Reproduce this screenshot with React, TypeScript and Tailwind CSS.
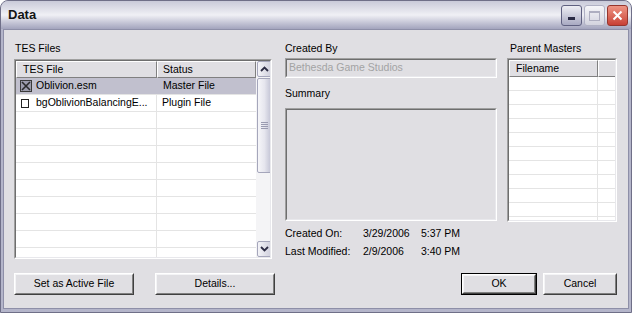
import React from 'react';

const font = { fontFamily: '"Liberation Sans", Arial, sans-serif' };

function Btn({ label, w, isDefault }: { label: string; w: string; isDefault?: boolean }) {
  return (
    <div className={`${w} h-[22px] ${isDefault ? 'border border-black' : ''}`}>
      <div className="h-full w-full border border-t-white border-l-white border-b-[#404040] border-r-[#404040]">
        <div className="h-full w-full flex items-center justify-center bg-[#e0dfe3] border border-t-[#f4f4f6] border-l-[#f4f4f6] border-b-[#808080] border-r-[#808080] text-[10.5px] text-black">
          {label}
        </div>
      </div>
    </div>
  );
}

function Sunken({ className, children }: { className: string; children?: React.ReactNode }) {
  return (
    <div className={`${className} border border-t-[#a0a0a0] border-l-[#a0a0a0] border-b-white border-r-white`}>
      <div className="h-full w-full border border-t-[#6e6e6e] border-l-[#6e6e6e] border-b-[#e8e8ec] border-r-[#e8e8ec] overflow-hidden">
        {children}
      </div>
    </div>
  );
}

function HeaderCell({ label, w, pl }: { label: string; w: string; pl: string }) {
  return (
    <div className={`${w} h-full shrink-0 bg-[#e0dfe3] border border-t-white border-l-white border-b-[#808080] border-r-[#808080] ${pl} flex items-center text-[10.5px]`}>
      {label}
    </div>
  );
}

function ScrollArrow({ up }: { up?: boolean }) {
  return (
    <div className="w-[15px] h-[16px] rounded-[2px] border border-[#a5a6bb] bg-gradient-to-r from-[#f4f4f8] to-[#cfcfdc] flex items-center justify-center">
      <svg width="9" height="6" viewBox="0 0 9 6">
        <path d={up ? 'M1 5 L4.5 1.5 L8 5' : 'M1 1 L4.5 4.5 L8 1'} stroke="#2c2c44" strokeWidth="1.8" fill="none" />
      </svg>
    </div>
  );
}

export default function App() {
  const filler = Array.from({ length: 8 });
  const masterRows = Array.from({ length: 10 });

  return (
    <div style={font} className="w-[632px] h-[313px] flex flex-col bg-[#b4b5ca] rounded-t-[8px] border border-[#6f6f88] overflow-hidden text-black">
      {/* title bar */}
      <div className="h-[28px] shrink-0 flex items-center pl-[7px] pr-[3px] bg-gradient-to-b from-[#c9cad9] via-[#f0f0f5] to-[#a3a4bd]">
        <span className="text-[13px] font-bold text-[#141414]">Data</span>
        <div className="ml-auto flex gap-[2px] pt-[1px]">
          <div className="w-[21px] h-[21px] rounded-[3px] border border-[#5f6080] bg-gradient-to-b from-[#eeeef4] to-[#a9aac2] flex items-end justify-center pb-[5px]">
            <div className="w-[7px] h-[3px] bg-[#2a2a44]" />
          </div>
          <div className="w-[21px] h-[21px] rounded-[3px] border border-[#b0b1c4] bg-gradient-to-b from-[#f6f6f9] to-[#d3d3de] flex items-center justify-center">
            <div className="w-[11px] h-[10px] border border-[#aeaec0] border-t-2" />
          </div>
          <div className="w-[21px] h-[21px] rounded-[3px] border border-[#96362e] bg-gradient-to-b from-[#ee9484] to-[#c83f35] flex items-center justify-center">
            <svg width="11" height="11" viewBox="0 0 11 11">
              <path d="M1.5 1.5 L9.5 9.5 M9.5 1.5 L1.5 9.5" stroke="white" strokeWidth="2" />
            </svg>
          </div>
        </div>
      </div>

      {/* body */}
      <div className="flex-1 mx-[2px] mb-[3px] bg-[#e0dfe3] border border-[#8e8fa8] pl-[10px] pr-[11px] pt-[12px] flex flex-col">
        <div className="flex gap-[10px]">
          {/* TES files */}
          <div className="w-[261px]">
            <div className="text-[10.5px] leading-[13px] pl-[1px]">TES Files</div>
            <Sunken className="mt-[4px] w-[258px] h-[200px] bg-white">
              <div className="flex h-full bg-white">
                <div className="w-[240px] flex flex-col">
                  <div className="h-[17px] flex shrink-0">
                    <HeaderCell label="TES File" w="w-[141px]" pl="pl-[6px]" />
                    <HeaderCell label="Status" w="w-[99px]" pl="pl-[5px]" />
                  </div>
                  <div className="flex h-[17px] border-b border-[#e4e4e4] bg-[#c1c0ce] text-[10.5px] items-center">
                    <div className="w-[141px] flex items-center pl-[4px] gap-[4px]">
                      <svg width="12" height="12" viewBox="0 0 12 12">
                        <rect x="0.5" y="0.5" width="11" height="11" fill="#9c9cac" stroke="#3a3a3a" />
                        <path d="M2 2 L10 10 M10 2 L2 10" stroke="#2a2a2a" strokeWidth="1.6" />
                      </svg>
                      <span>Oblivion.esm</span>
                    </div>
                    <div className="pl-[6px]">Master File</div>
                  </div>
                  <div className="flex h-[17px] border-b border-[#e4e4e4] text-[10.5px] items-center">
                    <div className="w-[141px] h-full flex items-center pl-[5px] gap-[7px] border-r border-[#e4e4e4]">
                      <div className="w-[8px] h-[9px] border border-[#222]" />
                      <span>bgOblivionBalancingE...</span>
                    </div>
                    <div className="pl-[5px]">Plugin File</div>
                  </div>
                  {filler.map((_, i) => (
                    <div key={i} className="flex h-[17px] border-b border-[#e4e4e4] shrink-0">
                      <div className="w-[141px] h-full border-r border-[#e4e4e4]" />
                    </div>
                  ))}
                  <div className="flex-1 flex">
                    <div className="w-[141px] h-full border-r border-[#e4e4e4]" />
                  </div>
                </div>
                {/* scrollbar */}
                <div className="w-[16px] h-full bg-[#f4f4f6] flex flex-col pl-[1px]">
                  <ScrollArrow up />
                  <div className="mt-[1px] w-[15px] h-[95px] rounded-[2px] border border-[#a5a6bb] bg-gradient-to-r from-[#f6f6f9] via-[#e6e6ee] to-[#c2c3d4] flex flex-col items-center justify-center gap-[1px]">
                    <div className="w-[7px] h-[1px] bg-[#9a9bb0]" />
                    <div className="w-[7px] h-[1px] bg-[#9a9bb0]" />
                    <div className="w-[7px] h-[1px] bg-[#9a9bb0]" />
                    <div className="w-[7px] h-[1px] bg-[#9a9bb0]" />
                  </div>
                  <div className="flex-1" />
                  <ScrollArrow />
                </div>
              </div>
            </Sunken>
          </div>

          {/* details */}
          <div className="w-[212px] text-[10.5px]">
            <div className="leading-[13px]">Created By</div>
            <Sunken className="mt-[3px] w-[212px] h-[20px]">
              <div className="h-full flex items-center pl-[2px] text-[#a3a3a3]">Bethesda Game Studios</div>
            </Sunken>
            <div className="mt-[9px] leading-[13px]">Summary</div>
            <Sunken className="mt-[8px] w-[212px] h-[113px]" />
            <div className="mt-[6px] leading-[13px] flex">
              <span className="w-[78px]">Created On:</span>
              <span className="w-[58px]">3/29/2006</span>
              <span>5:37 PM</span>
            </div>
            <div className="mt-[5px] leading-[13px] flex">
              <span className="w-[78px]">Last Modified:</span>
              <span className="w-[58px]">2/9/2006</span>
              <span>3:40 PM</span>
            </div>
          </div>

          {/* parent masters */}
          <div className="w-[110px] text-[10.5px]">
            <div className="leading-[13px] pl-[3px]">Parent Masters</div>
            <Sunken className="mt-[3px] w-[110px] h-[164px] bg-white">
              <div className="h-full bg-white flex flex-col">
                <div className="h-[17px] flex shrink-0">
                  <HeaderCell label="Filename" w="w-[89px]" pl="pl-[6px]" />
                  <HeaderCell label="" w="w-[30px]" pl="pl-0" />
                </div>
                {masterRows.map((_, i) => (
                  <div key={i} className="flex h-[14px] border-b border-[#e4e4e4] shrink-0">
                    <div className="w-[89px] h-full border-r border-[#e4e4e4]" />
                  </div>
                ))}
                <div className="flex-1 flex">
                  <div className="w-[89px] h-full border-r border-[#e4e4e4]" />
                </div>
              </div>
            </Sunken>
          </div>
        </div>

        {/* buttons */}
        <div className="mt-[14px] flex items-center">
          <div className="flex gap-[21px]">
            <Btn label="Set as Active File" w="w-[120px]" />
            <Btn label="Details..." w="w-[120px]" />
          </div>
          <div className="ml-auto flex gap-[6px]">
            <Btn label="OK" w="w-[76px]" isDefault />
            <Btn label="Cancel" w="w-[74px]" />
          </div>
        </div>
      </div>
    </div>
  );
}
